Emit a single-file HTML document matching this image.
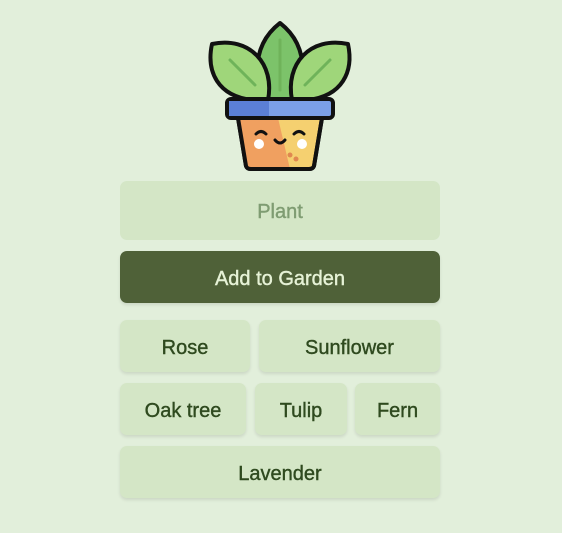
<!DOCTYPE html>
<html><head><style>
body{margin:0;width:562px;height:533px;background:#e2efdb;font-family:"Liberation Sans",sans-serif;position:relative;overflow:hidden}
.b{position:absolute;box-sizing:border-box;border-radius:7px;background:#d4e6c6;color:#2f4a1f;font-size:20px;display:flex;align-items:center;justify-content:center;padding-top:4px;box-shadow:0 2px 3px rgba(0,0,0,0.1);-webkit-text-stroke:0.4px currentColor}
</style></head><body>
<svg style="position:absolute;left:0;top:0" width="562" height="180" viewBox="0 0 562 180">
<g stroke="#111" stroke-width="4" stroke-linejoin="round" stroke-linecap="round">
<path d="M280 23 C258 40 252 66 262 100 L298 100 C308 66 302 40 280 23Z" fill="#7cc36a"/>
<path d="M212 44 C250 36 275 64 268 100 L252 100 C218 96 206 72 212 44Z" fill="#9fd67a"/>
<path d="M348 44 C310 36 285 64 292 100 L308 100 C342 96 354 72 348 44Z" fill="#9fd67a"/>
<path d="M238 118 L322 118 L314 166 Q313 169 309 169 L251 169 Q247 169 246 166Z" fill="#f5d070"/>
<path d="M238 118 L278 118 L290 169 L251 169 Q247 169 246 166Z" fill="#f0a060" stroke="none"/>
<path d="M238 118 L322 118 L314 166 Q313 169 309 169 L251 169 Q247 169 246 166Z" fill="none"/>
<rect x="227" y="99" width="106" height="19" rx="4" fill="#7b9fe8"/>
<rect x="229" y="101" width="40" height="15" fill="#5b7fd6" stroke="none"/>
</g>
<g stroke="#6fb35a" stroke-width="3" stroke-linecap="round" fill="none">
<path d="M280 40 L280 90"/><path d="M230 60 L255 85"/><path d="M330 60 L305 85"/>
</g>
<g stroke="#111" stroke-width="3" fill="none" stroke-linecap="round">
<path d="M256 134 Q261 129 266 134"/><path d="M294 134 Q299 129 304 134"/><path d="M275 140 Q280 146 285 140"/>
</g>
<circle cx="259" cy="144" r="5" fill="#fff"/><circle cx="302" cy="144" r="5" fill="#fff"/>
<circle cx="290" cy="155" r="2.5" fill="#e08850"/><circle cx="296" cy="159" r="2.5" fill="#e08850"/>
</svg>
<div class="b" style="left:120px;top:181px;width:320px;height:59px;color:#7f9c72;box-shadow:none">Plant</div>
<div class="b" style="left:120px;top:251px;width:320px;height:52px;background:#4f6138;color:#e6f2d6">Add to Garden</div>
<div class="b" style="left:120px;top:320px;width:130px;height:52px">Rose</div>
<div class="b" style="left:259px;top:320px;width:181px;height:52px">Sunflower</div>
<div class="b" style="left:120px;top:383px;width:126px;height:52px">Oak tree</div>
<div class="b" style="left:255px;top:383px;width:92px;height:52px">Tulip</div>
<div class="b" style="left:355px;top:383px;width:85px;height:52px">Fern</div>
<div class="b" style="left:120px;top:446px;width:320px;height:52px">Lavender</div>
</body></html>
